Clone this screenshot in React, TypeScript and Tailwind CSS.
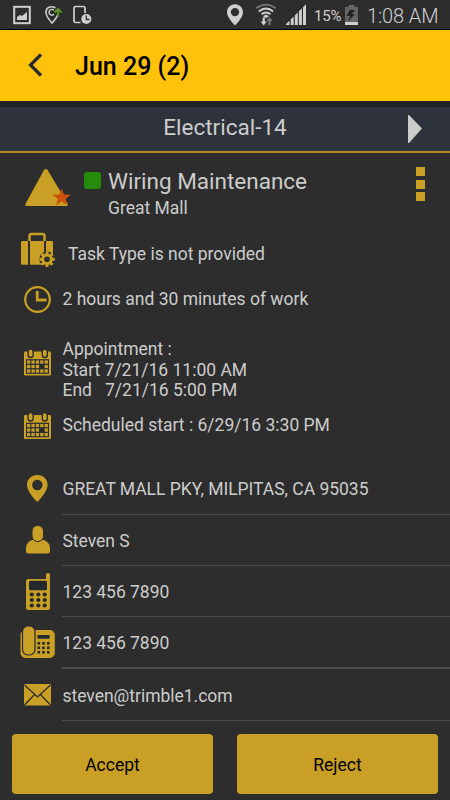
import type { ReactNode } from "react";

const GOLD = "#c99f26";
const DARK = "#2d2d2d";

/* Icon column at the left of every row. `top` and `height` select its slice of the sheet. */
function IconSlot({ top, height, children }: { top: number; height: number; children: ReactNode }) {
  return (
    <svg width="62" height={height} viewBox={`0 ${top} 62 ${height}`} className="shrink-0 overflow-visible" fill={GOLD}>
      {children}
    </svg>
  );
}

function Calendar({ y }: { y: number }) {
  const cells: ReactNode[] = [];
  for (let r = 0; r < 3; r++) {
    for (let c = 0; c < 5; c++) {
      if (r === 1 && c === 3) continue;
      cells.push(<rect key={`${r}-${c}`} x={27 + c * 4.4} y={y + 10.4 + r * 4.5} width="3.3" height="3.3" />);
    }
  }
  return (
    <g>
      <rect x="24" y={y + 1.5} width="27" height="24" rx="1.2" />
      <rect x="26" y={y + 9.2} width="23" height="14.6" fill="#252a30" />
      {cells}
      {[30.6, 44.8].map((x) => (
        <rect key={x} x={x - 2.5} y={y - 1} width="5" height="8.5" rx="2.5" stroke={DARK} strokeWidth="1.4" />
      ))}
    </g>
  );
}

function StatusBar() {
  return (
    <div className="flex h-[30px] items-center border-b border-black bg-[#2d2d2d] text-[#cfcfcf]">
      <svg width="312" height="29" viewBox="0 0 312 29" fill="#cfcfcf" className="shrink-0">
        <rect x="14.2" y="6.8" width="15.6" height="16.4" fill="none" stroke="#cfcfcf" strokeWidth="2" />
        <path d="M17 20v-3l3-2 2 1 5-4v8z" />
        <path d="M55.5 8c-5-3-10 0-9.5 5 .5 4 6 10 6 10s4.500-4.500 5.500-8" fill="none" stroke="#cfcfcf" strokeWidth="1.600" />
        <path d="M54 10.300a2.900 2.900 0 1 0 0 4" fill="none" stroke="#cfcfcf" strokeWidth="1.400" />
        <path d="M54.500 12.500 58 9l3.500 3.500M58 9.500V17" fill="none" stroke="#5c9627" strokeWidth="1.900" />
        <path d="M85 13V8q0-1.500-1.500-1.500h-8Q74 6.500 74 8v13q0 1.500 1.500 1.500h5" fill="none" stroke="#cfcfcf" strokeWidth="1.700" />
        <circle cx="86.300" cy="19" r="5" />
        <path d="M86.300 15.500V19.500H89.500" fill="none" stroke={DARK} strokeWidth="1.300" />
        <path fillRule="evenodd" d="M235 4.300c-5 0-8 3.700-8 8 0 5.500 8 13.200 8 13.200s8-7.700 8-13.200c0-4.300-3-8-8-8zm0 3.600a4.200 4.200 0 1 1 0 8.400 4.200 4.200 0 0 1 0-8.400z" />
        <g fill="none" strokeWidth="1.800">
          <path d="M256.300 8.300Q266 1 275.700 8.300" stroke="#777" />
          <path d="M258.800 11.500Q266 5.500 273.200 11.500M261.500 14.300Q266 10.600 270.500 14.300" stroke="#cfcfcf" />
        </g>
        <path d="m263 16.200 3-1.700 3 1.700-3 2z" />
        <path d="M262.600 17.500h2.200v4h2L263.700 25.500 260.600 21.500h2z" />
        <path fill="#777" d="M268.400 25v-4h-2l3.100-4 3.100 4h-2v4z" />
        <path d="M286 25v-1l3.500-3.300V25zM290.700 25v-5.500l3-3V25zM294.800 25v-9.600l3-3V25zM298.900 25V11.300l3-3V25zM303 25V7.200l3-3V25z" />
      </svg>
      <span className="mt-[3px] w-[32px] pl-[2px] text-[15px] leading-none tracking-[-0.2px]">15%</span>
      <svg width="14" height="29" viewBox="344 0 14 29" className="shrink-0 overflow-visible">
        <path fill="#656565" d="M348.500 5h6v2h3.500v18h-13V7h3.500z" />
        <path fill="#cfcfcf" d="M345 22h13v3h-13z" />
        <path fill="#222" d="m349.800 10-3.300 6h3.500l-2 5.500 7-7.500h-3.500l3.500-4z" />
      </svg>
      <span className="mt-[3px] ml-[9px] whitespace-nowrap text-[20px] leading-none font-light tracking-[-0.1px]">1:08 AM</span>
    </div>
  );
}

function ContactRow({ top, height, text, line, children }: { top: number; height: number; text: string; line: string; children: ReactNode }) {
  return (
    <div className="flex">
      <IconSlot top={top} height={height}>{children}</IconSlot>
      <div className={`flex flex-1 items-center border-[#4b4b4b] pl-[0.5px] tracking-[-0.02px] ${line}`}>{text}</div>
    </div>
  );
}

const gearTeeth = [0, 45, 90, 135, 180, 225, 270, 315];

export default function App() {
  return (
    <div className="flex h-[800px] w-[450px] flex-col overflow-hidden bg-[#2d2d2d] font-['Roboto',sans-serif] text-[17.5px] leading-[20.5px] text-[#cccccc]">
      <StatusBar />
      <header className="flex h-[71px] shrink-0 items-center bg-[#ffc20a] text-black">
        <svg width="75" height="71" viewBox="0 30 75 71" className="shrink-0">
          <path d="M41 54.500 30.500 65 41 75.500" fill="none" stroke="#27292d" strokeWidth="3.200" />
        </svg>
        <h1 className="pt-[2px] text-[25px] leading-none font-medium">Jun 29 (2)</h1>
      </header>
      <div className="flex h-[52px] shrink-0 items-center border-t-[6px] border-b-2 border-t-[#202323] border-b-[#b18b22] bg-[#2e323a]">
        <div className="w-[450px] pb-[4px] text-center text-[22.5px] leading-none">Electrical-14</div>
        <svg width="43" height="44" viewBox="407 107 43 44" className="-ml-[43px] shrink-0">
          <path fill="#cccccc" d="M408 115h1l13 13.500-13 14.500h-1z" />
        </svg>
      </div>

      <main>
        <section className="flex h-[72px]">
          <svg width="108" height="72" viewBox="0 153 108 72" className="shrink-0" fill={GOLD}>
            <path d="M44 170q1.800-2 3.600 0l20 33.500q1 2.500-1.500 2.500H26.500q-2 0-.8-2.500z" />
            <path fill="#ce510c" d="m61.700 188.500 2.300 6 6.700.3-5.200 4.100 1.900 6.400-5.700-3.700-5.700 3.700 1.900-6.400-5.200-4.100 6.700-.3z" />
            <rect x="84" y="172" width="17" height="17" rx="3" fill="#258c0b" />
          </svg>
          <div className="flex-1 pt-[15px]">
            <h2 className="text-[22.5px] leading-[26px]">Wiring Maintenance</h2>
            <p className="pt-[4px]">Great Mall</p>
          </div>
          <div className="mr-[25px] flex w-[9px] flex-col gap-[4px] pt-[14px]">
            <i className="block h-[9px] w-[9px] bg-[#c99f26]" />
            <i className="block h-[9px] w-[9px] bg-[#c99f26]" />
            <i className="-mt-[1px] block h-[9px] w-[9px] bg-[#c99f26]" />
          </div>
        </section>

        <section className="flex h-[58px] items-center">
          <IconSlot top={225} height={58}>
            <path d="M29.500 241v-5q0-2 2-2h11q2 0 2 2v5" fill="none" stroke={GOLD} strokeWidth="2.500" />
            <path d="M22.500 241H28v23.800h-5.500q-1.500 0-1.500-1.500v-20.800q0-1.500 1.500-1.500zM30 241h14v23.800H30zM46 241h6q1 0 1 1v21.500q0 1.300-1.300 1.300H46z" />
            <circle cx="47" cy="259.300" r="7.800" fill={DARK} />
            {gearTeeth.map((a) => (
              <rect key={a} x="45.500" y="251.600" width="3" height="4" transform={`rotate(${a} 47 259.300)`} />
            ))}
            <circle cx="47" cy="259.300" r="4.300" fill="none" stroke={GOLD} strokeWidth="3" />
          </IconSlot>
          <p className="pl-[6px]">Task Type is not provided</p>
        </section>

        <section className="flex h-[32px] items-center">
          <IconSlot top={283} height={32}>
            <circle cx="37.500" cy="299.500" r="12.300" fill="none" stroke={GOLD} strokeWidth="2.200" />
            <path d="M37.200 291v9h9.300" fill="none" stroke={GOLD} strokeWidth="2.800" />
          </IconSlot>
          <p className="pl-[0.5px]">2 hours and 30 minutes of work</p>
        </section>

        <section className="flex h-[85px]">
          <IconSlot top={315} height={85}><Calendar y={350} /></IconSlot>
          <div className="pt-[24px] pl-[0.5px] whitespace-pre">
            <p>Appointment :</p>
            <p>Start 7/21/16 11:00 AM</p>
            <p>{"End   7/21/16 5:00 PM"}</p>
          </div>
        </section>

        <section className="flex h-[50px] items-center">
          <IconSlot top={400} height={50}><Calendar y={413.500} /></IconSlot>
          <p className="pl-[0.5px]">Scheduled start : 6/29/16 3:30 PM</p>
        </section>

        <section className="pt-[14px]">
          <ContactRow top={464} height={51} line="border-b pt-[1px]" text="GREAT MALL PKY, MILPITAS, CA 95035">
            <path fillRule="evenodd" d="M37.300 475c-6.300 0-10.300 4.500-10.300 10 0 7 10.300 17 10.300 17s10.300-10 10.300-17c0-5.500-4-10-10.300-10zm0 4.800a5.200 5.200 0 1 1 0 10.400 5.200 5.200 0 0 1 0-10.400z" />
          </ContactRow>
          <ContactRow top={515} height={51} line="border-b pt-[2px]" text="Steven S">
            <path d="M26 548q0-6.500 7.500-8.500 4.200 4.500 8.500 0 8 2 8 8.500v3q0 2.500-2.500 2.500h-19Q26 553.500 26 551z" />
            <rect x="32" y="525.500" width="11.500" height="16" rx="5.500" stroke={DARK} strokeWidth="1" />
          </ContactRow>
          <ContactRow top={566} height={51} line="border-b pt-[2px]" text="123 456 7890">
            <path d="M28 579h18v-4.500q0-1.500 2-1.500t2 1.500V608q0 2-2 2H28q-2 0-2-2v-27q0-2 2-2z" />
            <rect x="29" y="580.800" width="18" height="9.500" rx="1.500" fill="#25292e" />
            {[594.5, 600, 605.5].map((y) => [31.8, 38.300, 44.700].map((x) => <circle key={`${x}-${y}`} cx={x} cy={y} r="2.100" fill="#25292e" />))}
          </ContactRow>
          <ContactRow top={617} height={52} line="border-b-2 pt-[2px]" text="123 456 7890">
            <rect x="20.500" y="630" width="34.300" height="28" rx="5" />
            <rect x="22.500" y="626" width="12.500" height="29" rx="5.500" stroke="#282b2e" strokeWidth="1.200" />
            <rect x="37.500" y="635" width="12" height="3.700" fill="#25292e" />
            {[642.5, 647, 651.5].map((y) => [37.500, 42.200, 47].map((x) => <rect key={`${x}-${y}`} x={x} y={y - 0.500} width="2.600" height="2.600" fill="#25292e" />))}
          </ContactRow>
          <ContactRow top={669} height={52} line="border-b pt-[3px]" text="steven@trimble1.com">
            <rect x="24" y="684" width="27" height="21.500" rx="1" />
            <path d="m24.500 685 13 12 13-12M24.500 705l10-10.500M50.500 705l-10-10.500" fill="none" stroke="#25292e" strokeWidth="1.200" />
          </ContactRow>
        </section>
      </main>

      <footer className="flex gap-6 pt-[13px] pl-[12px]">
        <button className="h-[60px] w-[201px] rounded-[4px] bg-[#c99f26] pt-[2px] text-black">Accept</button>
        <button className="h-[60px] w-[201px] rounded-[4px] bg-[#c99f26] pt-[2px] text-black">Reject</button>
      </footer>
    </div>
  );
}
